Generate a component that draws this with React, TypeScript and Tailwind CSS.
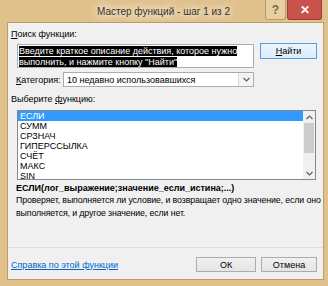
const functions = ["ЕСЛИ", "СУММ", "СРЗНАЧ", "ГИПЕРССЫЛКА", "СЧЁТ", "МАКС", "SIN"];

const ChevronUp = () => (
  <svg width="7" height="5" viewBox="0 0 7 5" fill="none">
    <path d="M0.5 4L3.5 1L6.5 4" stroke="#606060" strokeWidth="1.2" />
  </svg>
);

const ChevronDown = () => (
  <svg width="7" height="5" viewBox="0 0 7 5" fill="none">
    <path d="M0.5 1L3.5 4L6.5 1" stroke="#606060" strokeWidth="1.2" />
  </svg>
);

const App = () => {
  return (
    <div className="flex h-[286px] w-[328px] flex-col bg-[#e0c18c] font-['Liberation_Sans',sans-serif] text-[9px] leading-[12px] text-black">
      {/* title bar */}
      <div className="flex h-[23px] items-start">
        <div className="flex h-[23px] flex-1 items-center justify-center pl-[62px]">
          <span className="text-[10px] text-[#333] [text-shadow:0_0_6px_#fbf1dc,0_0_10px_#fbf1dc,0_0_14px_#f8ead0]">
            Мастер функций - шаг 1 из 2
          </span>
        </div>
        <div className="flex h-[20px] w-[21px] items-center justify-center rounded-b-[3px] border border-t-0 border-[#b99a66] bg-[#e9cfa0] text-[12px] font-bold text-[#7a6a52]">
          ?
        </div>
        <div className="mr-[6px] ml-[1px] flex h-[20px] w-[35px] items-center justify-center rounded-b-[3px] border border-t-0 border-[#9e3a32] bg-[#c9524a] text-[12px] font-bold text-white">
          ✕
        </div>
      </div>

      {/* client area */}
      <div className="mr-[5px] mb-[7px] ml-[8px] flex flex-1 flex-col bg-[#f0f0f0] shadow-[0_0_0_1px_#bd9d68]">
        <div className="mt-[5px] ml-[3px] h-[12px]">
          <span className="underline">П</span>оиск функции:
        </div>

        <div className="mt-[3px] flex h-[25px] items-start">
          <div className="mt-[1px] ml-[9px] h-[24px] w-[237px] border border-[#abadb3] bg-white px-[1px] pt-[1px] leading-[10.5px] text-white">
            <span className="bg-black">
              Введите краткое описание действия, которое нужно выполнить, и нажмите кнопку "Найти"
            </span>
          </div>
          <div className="ml-[6px] flex h-[16px] w-[57px] items-center justify-center border border-[#569de5] bg-gradient-to-b from-[#ecf4fc] to-[#dcecfc]">
            <span className="underline">Н</span>айти
          </div>
        </div>

        <div className="mt-[4px] flex h-[15px] items-center">
          <div className="ml-[8px] w-[47px]">
            <span className="underline">К</span>атегория:
          </div>
          <div className="flex h-[15px] w-[191px] items-center border border-[#acacac] bg-white">
            <div className="flex-1 pl-[3px]">10 недавно использовавшихся</div>
            <div className="flex h-full w-[15px] items-center justify-center border-l border-[#d9d9d9] bg-[#f4f4f4]">
              <ChevronDown />
            </div>
          </div>
        </div>

        <div className="mt-[6px] ml-[3px] h-[12px]">
          Выберите <span className="underline">ф</span>ункцию:
        </div>

        <div className="mt-[5px] ml-[9px] flex h-[70px] w-[299px] border border-[#828790] bg-white">
          <div className="flex flex-1 flex-col">
            {functions.map((f, i) => (
              <div
                key={f}
                className={
                  i === 0
                    ? "h-[10px] bg-[#3399ff] pl-[2px] leading-[10px] text-white"
                    : "h-[10px] pl-[2px] leading-[10px]"
                }
              >
                {f}
              </div>
            ))}
          </div>
          <div className="flex w-[12px] flex-col items-center bg-[#f0f0f0]">
            <div className="flex h-[12px] items-center justify-center">
              <ChevronUp />
            </div>
            <div className="h-[30px] w-[10px] bg-[#cdcdcd]" />
            <div className="flex-1" />
            <div className="flex h-[12px] items-center justify-center">
              <ChevronDown />
            </div>
          </div>
        </div>

        <div className="mt-[2px] ml-[8px] h-[12px] font-bold">
          ЕСЛИ(лог_выражение;значение_если_истина;...)
        </div>
        <div className="ml-[8px] w-[306px] text-[8.8px] leading-[12.5px] tracking-[-0.12px]">
          Проверяет, выполняется ли условие, и возвращает одно значение, если оно выполняется, и другое значение, если нет.
        </div>

        <div className="flex-1" />
        <div className="h-px bg-[#dfdfdf]" />

        <div className="mt-[9px] mb-[7px] flex h-[15px] items-center">
          <a className="ml-[3px] flex-1 text-[#0066cc] underline">Справка по этой функции</a>
          <div className="flex h-[15px] w-[60px] items-center justify-center border border-[#acacac] bg-gradient-to-b from-[#f0f0f0] to-[#e5e5e5]">
            ОК
          </div>
          <div className="mr-[6px] ml-[5px] flex h-[15px] w-[56px] items-center justify-center border border-[#acacac] bg-gradient-to-b from-[#f0f0f0] to-[#e5e5e5]">
            Отмена
          </div>
        </div>
      </div>
    </div>
  );
};

export default App;
